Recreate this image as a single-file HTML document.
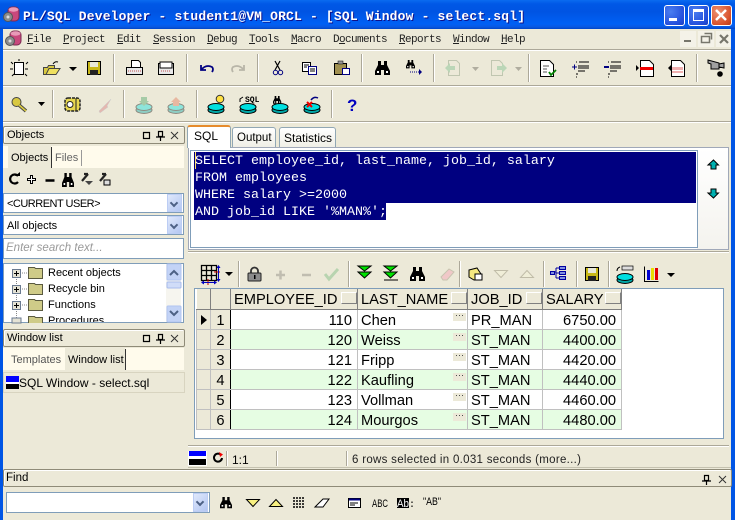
<!DOCTYPE html>
<html><head><meta charset="utf-8">
<style>
html,body{margin:0;padding:0;width:735px;height:520px;overflow:hidden;background:#ece9d8}
body{position:relative;font-family:"Liberation Sans",sans-serif;font-size:12px;color:#000}
.a{position:absolute}
.t{position:absolute;white-space:nowrap;line-height:16px}
.menu{position:absolute;top:33px;font-family:"Liberation Mono",monospace;font-size:11px;letter-spacing:-.6px;line-height:15px;color:#222;white-space:nowrap}
.menu u{text-decoration:underline}
.cap{position:absolute;border:1px solid #8f8b78;border-radius:2px;background:#ece9d8;box-shadow:inset 1px 1px 0 #fff}
.hl{position:absolute;height:1px;background:#aca899;box-shadow:0 1px 0 #fff}
.vl{position:absolute;width:1px;background:#aca899;box-shadow:1px 0 0 #fff}
.box{position:absolute;border:1px solid #7f9db9;background:#fff;box-sizing:border-box}
.dd{position:absolute;width:15px;background:linear-gradient(135deg,#dfe8fb,#b3c6f2);border:1px solid #bccdf4;box-sizing:border-box}
.dd:after{content:"";position:absolute;left:3px;top:5px;width:4px;height:4px;border-right:2px solid #4d6185;border-bottom:2px solid #4d6185;transform:rotate(45deg)}
.sql{position:absolute;left:195px;font-family:"Liberation Mono",monospace;font-size:13.33px;line-height:17px;color:#fff;white-space:pre}
table{position:absolute;left:196px;top:289px;border-collapse:collapse;table-layout:fixed;font-size:14.67px;width:425px}
td{height:20px;padding:3px 3px 0;border:1px solid #c0c0c0;line-height:16px;white-space:nowrap;overflow:hidden;box-sizing:border-box;position:relative}
tr{height:20px}
.f{background:#ece9d8}
.h td{background:#ece9d8;border-top:0;border-left-color:#fff;border-bottom:1px solid #808080;border-right:1px solid #808080}
.n{text-align:center;color:#000;border-right:1px solid #000;padding-left:0;padding-right:0}
.r{text-align:right;padding-right:5px}
.g td.c{background:#e6fde3}
.m:after{content:"···";position:absolute;right:1px;top:3px;width:13px;height:8px;background:#ece9d8;font-size:9px;line-height:5px;text-align:center;letter-spacing:0;color:#333}
.s:after{content:"";position:absolute;right:0;top:3px;width:16px;height:12px;background:#ece9d8;border:1px solid;border-color:#fff #808080 #808080 #fff;box-sizing:border-box}
svg{position:absolute;left:0;top:0}
</style></head><body>

<!-- title bar -->
<div class="a" style="left:0;top:0;width:735px;height:29px;background:linear-gradient(180deg,#0a6cf0 0,#0058e6 4px,#0054e3 12px,#0060f5 24px,#0a58e0 27px,#0046c8 29px)"></div>
<div class="a" style="left:0;top:29px;width:3px;height:491px;background:#0055e5"></div>
<div class="a" style="left:731px;top:29px;width:4px;height:491px;background:#0055e5"></div>
<div class="t" style="left:23px;top:9px;font-family:'Liberation Mono',monospace;font-weight:bold;font-size:13px;letter-spacing:.17px;color:#fff;text-shadow:1px 1px 0 #0f1089">PL/SQL Developer - student1@VM_ORCL - [SQL Window - select.sql]</div>

<!-- window buttons -->
<div class="a" style="left:664px;top:5px;width:21px;height:21px;box-sizing:border-box;border:1px solid #fff;border-radius:3px;background:radial-gradient(circle at 30% 30%,#4a7ef0,#2450dc 70%,#1a3fc0)"></div>
<div class="a" style="left:669px;top:18px;width:8px;height:3px;background:#fff"></div>
<div class="a" style="left:688px;top:5px;width:21px;height:21px;box-sizing:border-box;border:1px solid #fff;border-radius:3px;background:radial-gradient(circle at 30% 30%,#4a7ef0,#2450dc 70%,#1a3fc0)"></div>
<div class="a" style="left:693px;top:9px;width:11px;height:12px;box-sizing:border-box;border:1px solid #fff;border-top:3px solid #fff"></div>
<div class="a" style="left:711px;top:5px;width:21px;height:21px;box-sizing:border-box;border:1px solid #fff;border-radius:3px;background:radial-gradient(circle at 30% 30%,#ee9070,#d8502a 70%,#b83a18)"></div>

<!-- menu -->
<div class="menu" style="left:27px"><u>F</u>ile</div>
<div class="menu" style="left:63px"><u>P</u>roject</div>
<div class="menu" style="left:117px"><u>E</u>dit</div>
<div class="menu" style="left:153px"><u>S</u>ession</div>
<div class="menu" style="left:207px"><u>D</u>ebug</div>
<div class="menu" style="left:249px"><u>T</u>ools</div>
<div class="menu" style="left:291px"><u>M</u>acro</div>
<div class="menu" style="left:333px">D<u>o</u>cuments</div>
<div class="menu" style="left:399px"><u>R</u>eports</div>
<div class="menu" style="left:453px"><u>W</u>indow</div>
<div class="menu" style="left:501px"><u>H</u>elp</div>
<div class="a" style="left:680px;top:31px;width:16px;height:16px;background:#f4f2e8"></div>
<div class="a" style="left:698px;top:31px;width:16px;height:16px;background:#f4f2e8"></div>
<div class="a" style="left:716px;top:31px;width:15px;height:16px;background:#f4f2e8"></div>

<div class="hl" style="left:3px;top:49px;width:728px"></div>
<div class="hl" style="left:3px;top:85px;width:728px"></div>
<div class="hl" style="left:3px;top:121px;width:728px"></div>

<!-- toolbar seps -->
<div class="vl" style="left:113px;top:54px;height:28px"></div>
<div class="vl" style="left:186px;top:54px;height:28px"></div>
<div class="vl" style="left:257px;top:54px;height:28px"></div>
<div class="vl" style="left:361px;top:54px;height:28px"></div>
<div class="vl" style="left:433px;top:54px;height:28px"></div>
<div class="vl" style="left:528px;top:54px;height:28px"></div>
<div class="vl" style="left:696px;top:54px;height:28px"></div>
<div class="vl" style="left:52px;top:90px;height:28px"></div>
<div class="vl" style="left:123px;top:90px;height:28px"></div>
<div class="vl" style="left:196px;top:90px;height:28px"></div>
<div class="vl" style="left:331px;top:90px;height:28px"></div>

<!-- Objects panel -->
<div class="cap" style="left:3px;top:126px;width:180px;height:16px"></div>
<div class="t" style="left:7px;top:127px;font-size:11px">Objects</div>
<div class="a" style="left:3px;top:146px;width:181px;height:22px;background:#fffbec"></div>
<div class="a" style="left:8px;top:146px;width:43px;height:22px;background:#ece9d8"></div>
<div class="a" style="left:51px;top:147px;width:1px;height:21px;background:#333"></div>
<div class="a" style="left:81px;top:150px;width:1px;height:16px;background:#999"></div>
<div class="t" style="left:11px;top:150px;font-size:11px">Objects</div>
<div class="t" style="left:55px;top:150px;font-size:11px;color:#666">Files</div>

<div class="box" style="left:3px;top:193px;width:181px;height:20px"></div>
<div class="dd" style="left:167px;top:194px;height:18px"></div>
<div class="t" style="left:7px;top:196px;font-size:11px;letter-spacing:-.5px">&lt;CURRENT USER&gt;</div>
<div class="box" style="left:3px;top:215px;width:181px;height:20px"></div>
<div class="dd" style="left:167px;top:216px;height:18px"></div>
<div class="t" style="left:7px;top:218px;font-size:11px">All objects</div>
<div class="box" style="left:3px;top:238px;width:181px;height:21px"></div>
<div class="t" style="left:6px;top:240px;font-size:11.5px;font-style:italic;color:#999">Enter search text...</div>

<div class="box" style="left:3px;top:263px;width:181px;height:60px;overflow:hidden">
  <div class="t" style="left:44px;top:1px;font-size:11px">Recent objects</div>
  <div class="t" style="left:44px;top:17px;font-size:11px">Recycle bin</div>
  <div class="t" style="left:44px;top:33px;font-size:11px">Functions</div>
  <div class="t" style="left:44px;top:49px;font-size:11px">Procedures</div>
  <div class="a" style="left:162px;top:0;width:15px;height:58px;background:#f6f5ef"></div>
</div>

<!-- Window list -->
<div class="cap" style="left:3px;top:329px;width:180px;height:16px"></div>
<div class="t" style="left:7px;top:330px;font-size:11px">Window list</div>
<div class="a" style="left:3px;top:348px;width:181px;height:22px;background:#fffbec"></div>
<div class="a" style="left:65px;top:348px;width:60px;height:22px;background:#ece9d8"></div>
<div class="a" style="left:125px;top:349px;width:1px;height:21px;background:#333"></div>
<div class="t" style="left:11px;top:352px;font-size:11px;color:#555">Templates</div>
<div class="t" style="left:68px;top:352px;font-size:11px">Window list</div>
<div class="a" style="left:3px;top:372px;width:180px;height:19px;border:1px solid #d8d4c0;box-sizing:content-box;background:#ece9d8"></div>
<div class="t" style="left:19px;top:375px;font-size:12px">SQL Window - select.sql</div>

<!-- SQL tabs -->
<div class="a" style="left:188px;top:147px;width:541px;height:103px;background:#fff;border:1px solid #a0a8b8;box-sizing:border-box"></div>
<div class="a" style="left:697px;top:148px;width:31px;height:101px;background:linear-gradient(180deg,#fff,#f4f3ee)"></div>
<div class="a" style="left:232px;top:127px;width:44px;height:20px;box-sizing:border-box;border:1px solid #91a7b4;border-bottom:0;border-radius:3px 3px 0 0;background:linear-gradient(#fff,#f0efe6)"></div>
<div class="a" style="left:279px;top:127px;width:57px;height:20px;box-sizing:border-box;border:1px solid #91a7b4;border-bottom:0;border-radius:3px 3px 0 0;background:linear-gradient(#fff,#f0efe6)"></div>
<div class="a" style="left:187px;top:125px;width:44px;height:23px;box-sizing:border-box;border:1px solid #91a7b4;border-top:2px solid #e68b2c;border-bottom:0;border-radius:3px 3px 0 0;background:#fff"></div>
<div class="t" style="left:194px;top:128px;font-size:12px">SQL</div>
<div class="t" style="left:237px;top:130px;font-size:11.5px">Output</div>
<div class="t" style="left:284px;top:130px;font-size:12px">Statistics</div>

<!-- editor -->
<div class="box" style="left:190px;top:150px;width:508px;height:98px"></div>
<div class="a" style="left:194px;top:152px;width:502px;height:51px;background:#000080"></div>
<div class="a" style="left:194px;top:203px;width:192px;height:17px;background:#000080"></div>
<div class="a" style="left:195px;top:152px;width:1px;height:17px;background:#ffe060"></div>
<div class="sql" style="top:153px">SELECT employee_id, last_name, job_id, salary
FROM employees
WHERE salary &gt;=2000
AND job_id LIKE '%MAN%';</div>

<!-- grid toolbar seps -->
<div class="hl" style="left:188px;top:251px;width:541px"></div>
<div class="vl" style="left:238px;top:261px;height:26px"></div>
<div class="vl" style="left:348px;top:261px;height:26px"></div>
<div class="vl" style="left:459px;top:261px;height:26px"></div>
<div class="vl" style="left:543px;top:261px;height:26px"></div>
<div class="vl" style="left:576px;top:261px;height:26px"></div>
<div class="vl" style="left:608px;top:261px;height:26px"></div>

<!-- grid -->
<div class="box" style="left:194px;top:288px;width:530px;height:151px"></div>
<table>
<colgroup><col style="width:14px"><col style="width:20px"><col style="width:127px"><col style="width:110px"><col style="width:75px"><col style="width:79px"></colgroup>
<tr class="h"><td></td><td></td><td class="s">EMPLOYEE_ID</td><td class="s">LAST_NAME</td><td class="s">JOB_ID</td><td class="s">SALARY</td></tr>
<tr><td class="f"></td><td class="f n">1</td><td class="c r">110</td><td class="c m">Chen</td><td class="c">PR_MAN</td><td class="c r">6750.00</td></tr>
<tr class="g"><td class="f"></td><td class="f n">2</td><td class="c r">120</td><td class="c m">Weiss</td><td class="c">ST_MAN</td><td class="c r">4400.00</td></tr>
<tr><td class="f"></td><td class="f n">3</td><td class="c r">121</td><td class="c m">Fripp</td><td class="c">ST_MAN</td><td class="c r">4420.00</td></tr>
<tr class="g"><td class="f"></td><td class="f n">4</td><td class="c r">122</td><td class="c m">Kaufling</td><td class="c">ST_MAN</td><td class="c r">4440.00</td></tr>
<tr><td class="f"></td><td class="f n">5</td><td class="c r">123</td><td class="c m">Vollman</td><td class="c">ST_MAN</td><td class="c r">4460.00</td></tr>
<tr class="g"><td class="f"></td><td class="f n">6</td><td class="c r">124</td><td class="c m">Mourgos</td><td class="c">ST_MAN</td><td class="c r">4480.00</td></tr>
</table>

<!-- status -->
<div class="hl" style="left:188px;top:445px;width:541px"></div>
<div class="vl" style="left:226px;top:451px;height:15px"></div>
<div class="vl" style="left:276px;top:451px;height:15px"></div>
<div class="vl" style="left:346px;top:451px;height:15px"></div>
<div class="a" style="left:188px;top:467px;width:543px;height:1px;background:#c5c2b0"></div>
<div class="t" style="left:232px;top:452px;font-size:12px">1:1</div>
<div class="t" style="left:352px;top:452px;font-size:11.5px;letter-spacing:.3px;color:#222">6 rows selected in 0.031 seconds (more...)</div>

<!-- find -->
<div class="cap" style="left:3px;top:469px;width:727px;height:16px"></div>
<div class="t" style="left:6px;top:470px;font-size:11.5px">Find</div>
<div class="box" style="left:6px;top:492px;width:204px;height:21px"></div>
<div class="dd" style="left:193px;top:493px;height:19px"></div>

<svg width="735" height="520" viewBox="0 0 735 520">
<defs>
<g id="bin"><path d="M3 0h3v4h3V0h3v4l3 6v4H9V9H6v5H0v-4l3-6z" fill="#000"/><path d="M2 10h2v2H2zM11 10h2v2h-2z" fill="#fff"/></g>
<g id="stack"><ellipse cx="8" cy="11" rx="8" ry="3.5" fill="#00a8a8" stroke="#000"/><ellipse cx="8" cy="8" rx="8" ry="3.5" fill="#00e0e0" stroke="#000"/></g>
<g id="logo"><rect x="5" y="1" width="11" height="14" rx="4" fill="#c8487c" stroke="#7a2a50"/><ellipse cx="10.500" cy="3.500" rx="5" ry="2.200" fill="#e89ab8"/><circle cx="5" cy="11" r="4.500" fill="#8c8c8c" stroke="#555"/><circle cx="5" cy="11" r="1.500" fill="#ddd"/></g>
<g id="page"><path d="M.5.5h9l4 4v12H.5z" fill="#fff" stroke="#000"/></g>
</defs>
<use href="#logo" x="3" y="6"/>
<use href="#logo" x="5" y="30"/>
<!-- win close x -->
<path d="M716 10l10 10M726 10l-10 10" stroke="#fff" stroke-width="2.500"/>
<!-- mdi -->
<path d="M684 40h7v2h-7z" fill="#77766c"/>
<path d="M701.500 36.500h8v6h-8zM704.500 33.500h7v6" fill="none" stroke="#77766c" stroke-width="1.500"/>
<path d="M720 35l8 8M728 35l-8 8" stroke="#77766c" stroke-width="2.200"/>

<!-- toolbar1 -->
<g><rect x="14.500" y="62.500" width="9" height="12" fill="#fff" stroke="#000"/><path d="M19 59v2M11 62l2 2M28 62l-2 2M10 69h3M25 69h3M12 76l2-2M27 76l-2-2" stroke="#000"/></g>
<path d="M43.500 67.500h4l1-2h6v9h-11z" fill="#d8c840" stroke="#444"/><path d="M46 74.500l3-6h11l-4 6z" fill="#efe060" stroke="#444"/><path d="M53 64q2-3 5-2" stroke="#000" fill="none"/>
<path d="M69 67h8l-4 4z" fill="#000"/>
<path d="M87.500 61.500h13v13h-13z" fill="#c8b818" stroke="#000"/><rect x="90" y="62" width="8" height="5" fill="#e8e8d8"/><rect x="90" y="70" width="8" height="5" fill="#222"/>
<path d="M131.500 60.500h7l2 2v5h-9z" fill="#fff" stroke="#000"/><path d="M126.500 67.500h16v7h-16z" fill="#e8e8e8" stroke="#000"/><path d="M128 71h13" stroke="#c05050" stroke-dasharray="1 1"/>
<path d="M158.500 63.500h15v11h-15z" fill="#e8e8e8" stroke="#000"/><path d="M160 62h12v6h-12z" fill="#fff" stroke="#000"/><path d="M161 71h10" stroke="#c05050" stroke-dasharray="1 1"/>
<path d="M201 65v5h5M201 70q5-6 11-3q2 2 0 5" fill="none" stroke="#000080" stroke-width="1.800"/>
<path d="M244 65v5h-5M244 70q-5-6-11-3q-2 2 0 5" fill="none" stroke="#b8b5a8" stroke-width="1.800"/>
<path d="M275 61l5 9M280 61l-5 9" stroke="#000" stroke-width="1.200"/><circle cx="275.500" cy="72.500" r="2.200" fill="none" stroke="#000080"/><circle cx="280.500" cy="72.500" r="2.200" fill="none" stroke="#000080"/>
<path d="M302.500 62.500h8v9h-8z" fill="#fff" stroke="#000"/><path d="M308.500 66.500h8v8h-8z" fill="#fff" stroke="#000080"/><path d="M304 65h5M304 67h3M310 69h5M310 71h5" stroke="#000"/>
<path d="M334.500 63.500h12v11h-12z" fill="#a09050" stroke="#000"/><rect x="338" y="61" width="5" height="3" fill="#999" stroke="#000" stroke-width=".5"/><path d="M342.500 68.500h7v6h-7z" fill="#fff" stroke="#000080"/>
<use href="#bin" x="375" y="61"/>
<use href="#bin" transform="translate(406 60) scale(.6)"/><path d="M410 72h9" stroke="#000080" stroke-dasharray="1 1"/><path d="M419 69l3 3-3 3z" fill="#000080"/>
<g opacity=".45"><path d="M448.500 60.500h8l3 3v12h-11z" fill="#ece9d8" stroke="#8c9c80"/><path d="M445 68l5-5v3h5v4h-5v3z" fill="#80c090"/></g>
<path d="M472 67h7l-3.500 4z" fill="#b0ad9f"/>
<g opacity=".45"><path d="M491.500 60.500h8l3 3v12h-11z" fill="#ece9d8" stroke="#8c9c80"/><path d="M507 68l-5-5v3h-5v4h5v3z" fill="#80c090"/></g>
<path d="M515 67h7l-3.500 4z" fill="#b0ad9f"/>
<use href="#page" x="540" y="60"/><path d="M543 66h6M543 69h4M543 72h4" stroke="#555"/><path d="M549 72l2 3 5-5" fill="none" stroke="#008000" stroke-width="1.800"/>
<path d="M579 62h10M578 66h11M578 68h11M578 71h7M576 74h2M576 62h1M576 77h1" stroke="#000"/><path d="M572 67h5M574.500 64.500v5" stroke="#000080"/>
<path d="M611 62h10M610 66h11M610 68h11M610 71h7M608 74h2M608 62h1M608 77h1" stroke="#000"/><path d="M604 67h5" stroke="#000080" stroke-width="2"/>
<use href="#page" x="640" y="60"/><rect x="640" y="67" width="13" height="3" fill="#f00000"/><path d="M636 65l3 3-3 3z" fill="#000"/>
<use href="#page" x="671" y="60"/><rect x="672" y="67" width="11" height="3" fill="#f0b0b0"/><rect x="672" y="71" width="11" height="2" fill="#f0b0b0"/><path d="M671 65l-3 3 3 3z" fill="#000"/>
<path d="M708 60l11 3v6h-8v-5l-3-1zM719 64l5-1v5l-5-1z" fill="#a0a0a0" stroke="#000"/><circle cx="720" cy="74" r="2.800" fill="#000"/>

<!-- toolbar2 -->
<circle cx="16.500" cy="102" r="4.500" fill="#d8c840" stroke="#444"/><path d="M19 105l7 6" stroke="#444" stroke-width="3.500"/><path d="M19 105l7 6" stroke="#d8c840" stroke-width="1.800"/><path d="M38 102h7l-3.500 4z" fill="#000"/>
<g><rect x="65" y="98" width="15" height="13" rx="3" fill="#e8d850" stroke="#222" stroke-width="1.500" stroke-dasharray="3 1"/><circle cx="70" cy="104.500" r="3" fill="#fff" stroke="#222"/><path d="M76 98v13" stroke="#222"/></g>
<path d="M99 111l12-12-4 7 1 1-8 6z" fill="#e4b8b0" stroke="#ccc" stroke-width=".5"/>
<g opacity=".4"><use href="#stack" x="136" y="99"/><path d="M141 97h6v4h2l-5 5-5-5h2z" fill="#40a060"/></g>
<g opacity=".4"><use href="#stack" x="168" y="99"/><path d="M173 106h6v-4h2l-5-5-5 5h2z" fill="#e07050"/></g>
<use href="#stack" x="208" y="99"/><circle cx="220" cy="99" r="3.800" fill="#ffe040" stroke="#333"/>
<use href="#stack" x="240" y="99"/>
<text x="245" y="102" font-family="Liberation Mono,monospace" font-size="8" font-weight="bold">SQL</text><path d="M240 102v-3l3-2" stroke="#000" fill="none"/>
<use href="#stack" x="272" y="99"/><use href="#bin" transform="translate(273 96) scale(.55)"/>
<use href="#stack" x="304" y="99"/><path d="M307 102l5 5M312 102l-5 5" stroke="#f00000" stroke-width="2"/><path d="M311 100q3-4 7-2" stroke="#000080" fill="none" stroke-width="1.500"/>
<text x="347" y="111" font-family="Liberation Sans,sans-serif" font-size="17" font-weight="bold" fill="#0000c0">?</text>

<!-- objects panel caption icons -->
<path d="M143.500 132.500h6v6h-6z" fill="none" stroke="#000" stroke-width="1.200"/>
<path d="M158.500 131.500h4v5h-4zM156 137h9M160.500 137v4" fill="none" stroke="#000" stroke-width="1.200"/>
<path d="M171 132l7 7M178 132l-7 7" stroke="#333"/>
<path d="M143.500 335.500h6v6h-6z" fill="none" stroke="#000" stroke-width="1.200"/>
<path d="M158.500 334.500h4v5h-4zM156 340h9M160.500 340v4" fill="none" stroke="#000" stroke-width="1.200"/>
<path d="M171 335l7 7M178 335l-7 7" stroke="#333"/>
<path d="M704.500 475.500h4v5h-4zM702 481h9M706.500 481v4" fill="none" stroke="#000" stroke-width="1.200"/>
<path d="M719 476l7 7M726 476l-7 7" stroke="#333"/>
<!-- objects tool row -->
<path d="M18 176a4.500 4.500 0 1 0 0 6" fill="none" stroke="#000" stroke-width="2.200"/><path d="M15 176h5v-4z" fill="#000"/>
<path d="M30.500 175.500h2v3h3v2h-3v3h-2v-3h-3v-2h3z" fill="#fff" stroke="#000"/>
<path d="M45.500 180.500h9" stroke="#000" stroke-width="2.500"/>
<use href="#bin" transform="translate(62 173) scale(.8 1)"/>
<path d="M82 181l6-7M84 174h4" stroke="#222" stroke-width="2.200"/><path d="M85 181h8l-4 4z" fill="#444"/>
<path d="M100 181l6-7M102 174h4" stroke="#222" stroke-width="2.200"/><path d="M104 180h6v5h-6z" fill="#ddd" stroke="#000"/>
<!-- tree -->
<path d="M16.500 273v48M16 273h12M16 289h12M16 305h12" stroke="#888" stroke-dasharray="1 1" fill="none"/>
<g fill="#e4e2d4" stroke="#6a7a90"><rect x="12.500" y="269.500" width="8" height="8"/><rect x="12.500" y="285.500" width="8" height="8"/><rect x="12.500" y="301.500" width="8" height="8"/></g>
<path d="M14 273.500h5M16.500 271v5M14 289.500h5M16.500 287v5M14 305.500h5M16.500 303v5" stroke="#000"/>
<g fill="#cfcb88" stroke="#5a5a40"><path d="M28.500 267.500h6l1 1h7v10h-14z"/><path d="M28.500 283.500h6l1 1h7v10h-14z"/><path d="M28.500 299.500h6l1 1h7v10h-14z"/></g>
<rect x="12" y="318" width="9" height="5" fill="#e4e2d4" stroke="#6a7a90"/>
<path d="M28.500 323v-6.500h6l1 1h7v5.500" fill="#cfcb88" stroke="#5a5a40"/>
<!-- scrollbar -->
<rect x="167" y="264" width="14" height="16" rx="1" fill="#c3d3f6" stroke="#b0c4f0"/><path d="M170 275l4-4 4 4" fill="none" stroke="#4d6185" stroke-width="2"/>
<rect x="167" y="282" width="14" height="6" rx="1" fill="#d0dcf8" stroke="#a8bcec"/>
<rect x="167" y="306" width="14" height="16" rx="1" fill="#c3d3f6" stroke="#b0c4f0"/><path d="M170 311l4 4 4-4" fill="none" stroke="#4d6185" stroke-width="2"/>
<!-- window list icon -->
<rect x="6" y="376" width="13" height="6" fill="#0000ff"/><rect x="6" y="384" width="13" height="5" fill="#000"/><rect x="6" y="382" width="13" height="2" fill="#fff"/>
<!-- arrows -->
<path d="M713.500 160l5 5h-2.500v4h-5v-4H708z" fill="#00b0b0" stroke="#000"/>
<path d="M713.500 198l5-5h-2.500v-4h-5v4H708z" fill="#00b0b0" stroke="#000"/>
<!-- grid toolbar -->
<path d="M201.500 265.500h15v15h-15zM206.500 265.500v15M211.500 265.500v15M201.500 270.500h15M201.500 275.500h15" fill="#ece9d8" stroke="#000" stroke-width="1.300"/>
<path d="M214 272h6M208 279v6" stroke="#d00000"/>
<path d="M218.500 266v15" stroke="#0000c0"/><path d="M216.500 268l2-3 2 3zM216.500 279l2 3 2-3z" fill="#0000c0"/>
<path d="M202 282.500h14" stroke="#0000c0"/><path d="M204 280.500l-3 2 3 2zM214 280.500l3 2-3 2z" fill="#0000c0"/>
<path d="M225 272h8l-4 4z" fill="#000"/>
<path d="M251 273v-2a3.500 3.500 0 0 1 7 0v2" fill="none" stroke="#333" stroke-width="1.800"/><rect x="248" y="273" width="13" height="8" rx="1" fill="#8c8c8c" stroke="#222"/><rect x="254" y="275" width="1.500" height="4" fill="#000"/>
<path d="M276 275h9M280.500 270.500v9" stroke="#c0bdb0" stroke-width="2.500"/>
<path d="M302 275h9" stroke="#c0bdb0" stroke-width="2.500"/>
<path d="M325 274l4 5 9-10" fill="none" stroke="#b8d4b0" stroke-width="3"/>
<path d="M358 266h13l-6.500 5zM358 272h13l-6.500 6z" fill="#00e000" stroke="#000"/>
<path d="M384 266h13l-6.500 5zM384 272h13l-6.500 6z" fill="#00e000" stroke="#000"/><path d="M384 280h14" stroke="#000"/>
<use href="#bin" x="410" y="267"/>
<path d="M441 277l8-8 5 3-7 8h-4z" fill="#f0c8c8" stroke="#c8c4b0"/>
<path d="M469 270l8-2 4 6v6h-7l-5-3z" fill="#f4e880" stroke="#000"/><path d="M475 274h7v6h-7z" fill="#fff" stroke="#000"/>
<path d="M494.500 270.500h13l-6.500 7z" fill="#f0eed8" stroke="#c0bca8"/>
<path d="M520.500 277.500h13l-6.500-7z" fill="#f0eed8" stroke="#c0bca8"/>
<path d="M551 272h5M556 268v10M556 268h3M556 273h3M556 278h3" stroke="#0000a0" fill="none"/><g fill="#8090e0" stroke="#0000a0"><rect x="559.500" y="266.500" width="6" height="3"/><rect x="559.500" y="271.500" width="6" height="3"/><rect x="559.500" y="276.500" width="6" height="3"/><rect x="550.500" y="271.500" width="4" height="3"/></g>
<path d="M585.500 267.500h13v13h-13z" fill="#c8b818" stroke="#000"/><rect x="588" y="268" width="8" height="5" fill="#e8e8d8"/><rect x="588" y="276" width="8" height="5" fill="#222"/>
<rect x="622" y="266" width="11" height="4" fill="#ddd" stroke="#000" stroke-width=".7"/><path d="M617 271q0-3 3-4" stroke="#000" fill="none"/><use href="#stack" x="617" y="269"/>
<path d="M644.500 266.500v15h14" fill="none" stroke="#000"/><rect x="647" y="270" width="3" height="10" fill="#0000d0"/><rect x="651" y="268" width="3" height="12" fill="#e8e000"/><rect x="655" y="268" width="3" height="12" fill="#e00000"/>
<path d="M667 273h8l-4 4z" fill="#000"/>
<!-- row marker -->
<path d="M201 315l6 5-6 5z" fill="#000"/>
<!-- status -->
<rect x="188" y="451" width="19" height="15" fill="#fff"/><rect x="189" y="451" width="17" height="5" fill="#0000ff"/><rect x="189" y="459" width="17" height="6" fill="#000"/>
<path d="M221 455a4 4 0 1 0 1 3" fill="none" stroke="#000" stroke-width="2"/><path d="M219 452l4 2.500-3 2.500z" fill="#f00000"/>
<!-- find -->
<use href="#bin" transform="translate(220 497) scale(.8)"/>
<path d="M246.500 499.500h13l-6.500 7z" fill="#f8f080" stroke="#000"/>
<path d="M269.500 506.500h13l-6.500-7z" fill="#f8f080" stroke="#000"/>
<path d="M293 498h12M293 501h12M293 504h12M293 507h12" stroke="#000" stroke-width="1.500" stroke-dasharray="2 1"/>
<path d="M315 507l8-8h6l-6 8z" fill="#fff" stroke="#000"/>
<path d="M348.500 498.500h12v9h-12z" fill="#fff" stroke="#000"/><path d="M349 499.500h11" stroke="#000080" stroke-width="2"/><path d="M350 503h8M350 505h5" stroke="#000"/>
<text x="372" y="507" font-family="Liberation Sans,sans-serif" font-size="11" textLength="16" lengthAdjust="spacingAndGlyphs">ABC</text>
<rect x="397" y="498" width="12" height="10" fill="#000"/>
<text x="397" y="507" font-family="Liberation Sans,sans-serif" font-size="11" fill="#fff" textLength="12" lengthAdjust="spacingAndGlyphs">Ab</text><text x="409" y="507" font-family="Liberation Mono,monospace" font-size="10">:</text>
<text x="423" y="505" font-family="Liberation Sans,sans-serif" font-size="11" textLength="18" lengthAdjust="spacingAndGlyphs">"AB"</text>
</svg>
</body></html>
